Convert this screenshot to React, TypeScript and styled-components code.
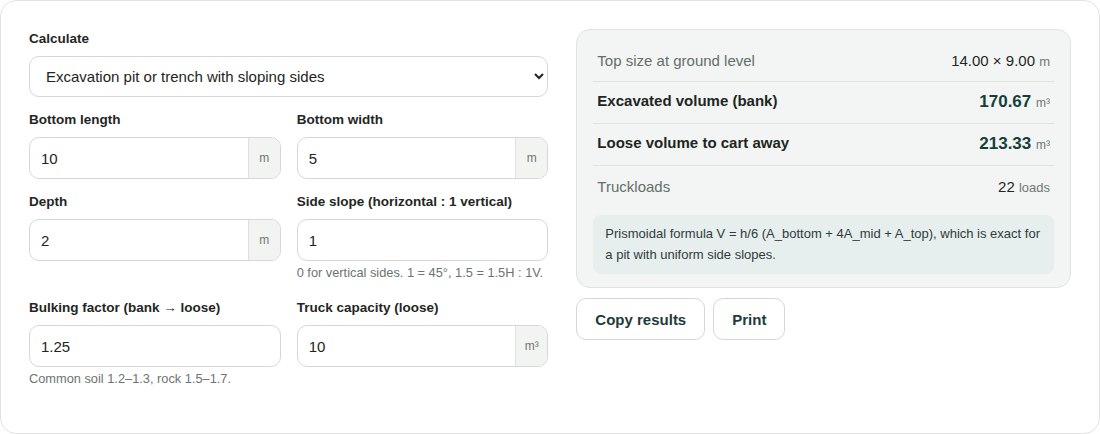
import styled, { createGlobalStyle } from "styled-components"


const GlobalStyle = createGlobalStyle`
    * {
        box-sizing: border-box;
    }

    body {
        margin: 0;
        font-family: "Liberation Sans", Arial, sans-serif;
        color: #1d2622;
        background: #fff;
    }
`


export default function App() {
    return (
        <>
            <GlobalStyle />
            <StyledCard>
                <FormColumn>
                    <Field>
                        <Label>Calculate</Label>
                        <Select defaultValue="pit">
                            <option value="pit">Excavation pit or trench with sloping sides</option>
                            <option value="rect">Rectangular pit with vertical sides</option>
                        </Select>
                    </Field>

                    <FieldGrid>
                        <Field>
                            <Label>Bottom length</Label>
                            <NumberInput value="10" unit="m" />
                        </Field>
                        <Field>
                            <Label>Bottom width</Label>
                            <NumberInput value="5" unit="m" />
                        </Field>
                        <Field>
                            <Label>Depth</Label>
                            <NumberInput value="2" unit="m" />
                        </Field>
                        <Field>
                            <Label>Side slope (horizontal : 1 vertical)</Label>
                            <NumberInput value="1" />
                            <Hint>0 for vertical sides. 1 = 45°, 1.5 = 1.5H : 1V.</Hint>
                        </Field>
                        <Field>
                            <Label>Bulking factor (bank → loose)</Label>
                            <NumberInput value="1.25" />
                            <Hint>Common soil 1.2–1.3, rock 1.5–1.7.</Hint>
                        </Field>
                        <Field>
                            <Label>Truck capacity (loose)</Label>
                            <NumberInput value="10" unit="m³" />
                        </Field>
                    </FieldGrid>
                </FormColumn>

                <ResultColumn>
                    <ResultPanel>
                        <ResultRow>
                            <RowLabel>Top size at ground level</RowLabel>
                            <RowValue>14.00 × 9.00 <Unit>m</Unit></RowValue>
                        </ResultRow>
                        <ResultRow>
                            <RowLabel $strong>Excavated volume (bank)</RowLabel>
                            <RowValue $strong>170.67 <Unit $small>m³</Unit></RowValue>
                        </ResultRow>
                        <ResultRow>
                            <RowLabel $strong>Loose volume to cart away</RowLabel>
                            <RowValue $strong>213.33 <Unit $small>m³</Unit></RowValue>
                        </ResultRow>
                        <ResultRow>
                            <RowLabel>Truckloads</RowLabel>
                            <RowValue>22 <Unit>loads</Unit></RowValue>
                        </ResultRow>
                        <Note>
                            Prismoidal formula V = h/6 (A_bottom + 4A_mid + A_top), which is exact for a pit with uniform side slopes.
                        </Note>
                    </ResultPanel>

                    <Actions>
                        <ActionButton type="button">Copy results</ActionButton>
                        <ActionButton type="button">Print</ActionButton>
                    </Actions>
                </ResultColumn>
            </StyledCard>
        </>
    )
}


function NumberInput({ value, unit }: NumberInputProps) {
    return (
        <InputGroup>
            <Input type="text" defaultValue={value} />
            {unit && <Addon>{unit}</Addon>}
        </InputGroup>
    )
}


const StyledCard = styled.main`
    display: grid;
    grid-template-columns: minmax(0, 1.05fr) minmax(0, 1fr);
    gap: 28px;
    align-items: start;

    width: 1100px;
    height: 434px;
    padding: 28px 28px;
    border: 1px solid #e0e3e0;
    border-radius: 16px;
    background: #fff;
`

const FormColumn = styled.section`
    display: flex;
    flex-direction: column;
    gap: 14px;
    padding-top: 1px;
`

const FieldGrid = styled.div`
    display: grid;
    grid-template-columns: 1fr 1fr;
    column-gap: 16px;
    row-gap: 14px;
`

const Field = styled.div`
    display: flex;
    flex-direction: column;
    min-width: 0;
`

const Label = styled.label`
    font-size: 13.5px;
    font-weight: 700;
    line-height: 18px;
    color: #1f2624;
    margin-bottom: 8px;
`

const Select = styled.select`
    height: 41px;
    padding: 0 10px 0 12px;
    font-family: inherit;
    font-size: 15px;
    color: #1d2622;
    background: #fff;
    border: 1px solid #d3d8d5;
    border-radius: 10px;
    outline: 0;
`

const InputGroup = styled.div`
    display: flex;
    height: 42px;
    border: 1px solid #d3d8d5;
    border-radius: 10px;
    overflow: hidden;
    background: #fff;
`

const Input = styled.input`
    flex: 1;
    min-width: 0;
    padding: 0 11px;
    border: 0;
    outline: 0;
    font-family: inherit;
    font-size: 15px;
    color: #1d2622;
    background: transparent;
`

const Addon = styled.span`
    display: flex;
    align-items: center;
    justify-content: center;
    min-width: 32px;
    padding: 0 8px;
    border-left: 1px solid #dde1de;
    background: #f2f4f2;
    font-size: 12px;
    color: #6f7873;
`

const Hint = styled.p`
    margin: 4px 0 4px;
    font-size: 12.8px;
    line-height: 16px;
    color: #6b746f;
`

const ResultColumn = styled.section`
    display: flex;
    flex-direction: column;
    gap: 10px;
`

const ResultPanel = styled.div`
    padding: 10px 16px 13px;
    border: 1px solid #e0e4e1;
    border-radius: 14px;
    background: #f3f5f4;
`

const ResultRow = styled.div`
    display: flex;
    justify-content: space-between;
    align-items: center;
    height: 41px;
    padding: 0 4px;

    & + & {
        height: 42px;
        border-top: 1px solid #dfe3e0;
    }
`

const RowLabel = styled.span<{ $strong?: boolean }>`
    font-size: 15px;
    line-height: 17px;
    font-weight: ${({ $strong }) => ($strong ? 700 : 400)};
    color: ${({ $strong }) => ($strong ? "#1d2622" : "#646e69")};
    margin-top: ${({ $strong }) => ($strong ? "-4px" : "0")};
`

const RowValue = styled.span<{ $strong?: boolean }>`
    font-size: ${({ $strong }) => ($strong ? "17px" : "15px")};
    line-height: 17px;
    font-weight: ${({ $strong }) => ($strong ? 700 : 400)};
    color: ${({ $strong }) => ($strong ? "#163f3c" : "#222826")};
`

const Unit = styled.span<{ $small?: boolean }>`
    font-size: ${({ $small }) => ($small ? "12px" : "13px")};
    font-weight: 400;
    color: #6f7873;
`

const Note = styled.p`
    margin: 8px 0 0;
    padding: 8px 12px 9px;
    border-radius: 8px;
    background: #e6eeee;
    font-size: 13px;
    line-height: 21px;
    color: #2f3c3a;
`

const Actions = styled.div`
    display: flex;
    gap: 8px;
`

const ActionButton = styled.button`
    height: 42px;
    padding: 0 18px;
    border: 1px solid #d3d8d5;
    border-radius: 10px;
    background: #fff;
    font-family: inherit;
    font-size: 15px;
    font-weight: 700;
    color: #1d3b3a;
    cursor: pointer;
`


type NumberInputProps = {
    value: string
    unit?: string
}
